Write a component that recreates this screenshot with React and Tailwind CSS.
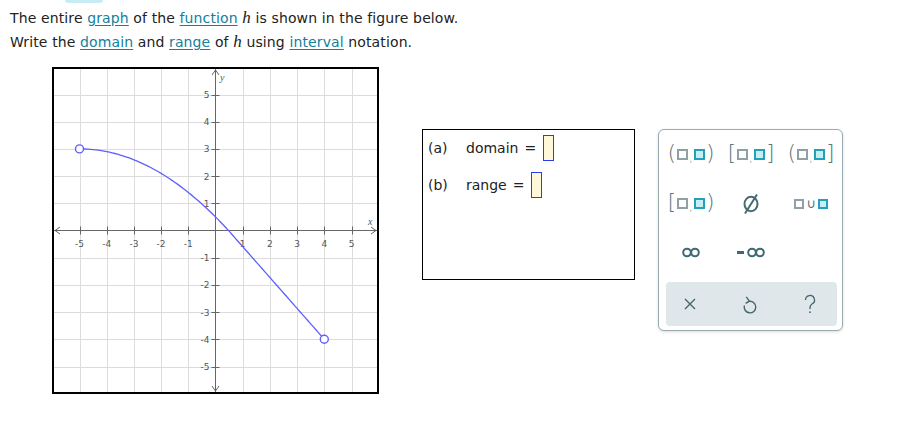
import React from "react";

const U = 27.2;
const O = 161.5;
const px = (x) => O + x * U;
const py = (y) => O - y * U;
const crisp = (v) => Math.round(v) + 0.5;

function curvePoints() {
  const pts = [];
  for (let i = 0; i <= 55; i++) {
    const x = -5 + i * 0.1;
    pts.push([x, 3 - (x + 5) ** 2 / 10]);
  }
  for (let i = 1; i <= 35; i++) {
    const x = 0.5 + i * 0.1;
    const y0 = 3 - 5.5 ** 2 / 10;
    pts.push([x, y0 + ((x - 0.5) / 3.5) * (-4 - y0)]);
  }
  return pts.map(([x, y]) => `${px(x).toFixed(2)},${py(y).toFixed(2)}`).join(" ");
}

function Graph() {
  const ks = [-5, -4, -3, -2, -1, 1, 2, 3, 4, 5];
  const axis = "#666";
  return (
    <svg width="323" height="323" className="block">
      {ks.map((k) => (
        <g key={"g" + k}>
          <line x1={crisp(px(k))} y1={0} x2={crisp(px(k))} y2={323} stroke="#dcdcdc" strokeWidth="1" />
          <line x1={0} y1={crisp(py(k))} x2={323} y2={crisp(py(k))} stroke="#dcdcdc" strokeWidth="1" />
        </g>
      ))}
      <line x1={0} y1={O} x2={323} y2={O} stroke={axis} strokeWidth="1" />
      <line x1={O} y1={0} x2={O} y2={323} stroke={axis} strokeWidth="1" />
      <polyline points={`6,${O - 3.5} 1,${O} 6,${O + 3.5}`} fill="none" stroke={axis} strokeWidth="1" />
      <polyline points={`317,${O - 3.5} 322,${O} 317,${O + 3.5}`} fill="none" stroke={axis} strokeWidth="1" />
      <polyline points={`${O - 3.5},6 ${O},1 ${O + 3.5},6`} fill="none" stroke={axis} strokeWidth="1" />
      <polyline points={`${O - 3.5},317 ${O},322 ${O + 3.5},317`} fill="none" stroke={axis} strokeWidth="1" />
      {ks.map((k) => (
        <g key={"t" + k}>
          <line x1={crisp(px(k))} y1={O - 4} x2={crisp(px(k))} y2={O + 4} stroke={axis} strokeWidth="1" />
          <line x1={O - 4} y1={crisp(py(k))} x2={O + 4} y2={crisp(py(k))} stroke={axis} strokeWidth="1" />
          <text x={px(k)} y={O + 16} textAnchor="middle" fontSize="9" fill="#555" fontFamily="'DejaVu Sans', sans-serif">
            {k}
          </text>
          <text x={O - 6} y={py(k) + 3.5} textAnchor="end" fontSize="9" fill="#555" fontFamily="'DejaVu Sans', sans-serif">
            {k}
          </text>
        </g>
      ))}
      <text x={166} y={12} fontSize="10" fontStyle="italic" fill="#555" fontFamily="'Liberation Serif', serif">y</text>
      <text x={314} y={156} fontSize="10" fontStyle="italic" fill="#555" fontFamily="'Liberation Serif', serif">x</text>
      <polyline points={curvePoints()} fill="none" stroke="#5f5fff" strokeWidth="1.3" />
      <circle cx={px(-5)} cy={py(3)} r="4" fill="white" stroke="#5f5fff" strokeWidth="1.4" />
      <circle cx={px(4)} cy={py(-4)} r="4" fill="white" stroke="#5f5fff" strokeWidth="1.4" />
    </svg>
  );
}

const Link = ({ children }) => (
  <span className="text-[#13809c] underline underline-offset-[2px]">{children}</span>
);
const H = () => (
  <span className="text-[17px] leading-none" style={{ fontFamily: "'Liberation Serif', serif", fontStyle: "italic" }}>h</span>
);

const Gray = ({ s = 11 }) => (
  <span className={`inline-block border-2 border-[#8fa1a6] bg-white ${s === 11 ? "w-[11px] h-[11px]" : "w-[10px] h-[10px]"}`} />
);
const Teal = ({ s = 11 }) => (
  <span className={`inline-block border-2 border-[#22a2b8] bg-[#c8eef5] ${s === 11 ? "w-[11px] h-[11px]" : "w-[10px] h-[10px]"}`} />
);

function Interval({ l, r }) {
  return (
    <span className="flex items-center text-[#5a7880] text-[22px] leading-none" style={{ fontFamily: "'DejaVu Sans', sans-serif", fontWeight: 200 }}>
      <span className="mr-[1px] -mt-[3px]">{l}</span>
      <Gray />
      <span className="text-[12px] ml-[1px] mr-[1px] mt-[6px]">,</span>
      <Teal />
      <span className="ml-[1px] -mt-[3px]">{r}</span>
    </span>
  );
}

const Inf = () => (
  <svg width="18" height="11" viewBox="0 0 18 11">
    <circle cx="5" cy="5.5" r="3.8" fill="none" stroke="#3f6a75" strokeWidth="2" />
    <circle cx="13" cy="5.5" r="3.8" fill="none" stroke="#3f6a75" strokeWidth="2" />
  </svg>
);

function Keypad() {
  const cell = "flex items-center justify-center h-[49px]";
  return (
    <div className="ml-[23px] mt-[62px] w-[185px] h-[202px] border border-[#98acb1] rounded-[6px] bg-white shadow-[0_1px_3px_rgba(0,0,0,0.15)] flex flex-col">
      <div className="grid grid-cols-[60px_60px_60px] pl-[2px]">
        <div className={cell}><Interval l="(" r=")" /></div>
        <div className={cell}><Interval l="[" r="]" /></div>
        <div className={cell}><Interval l="(" r="]" /></div>
        <div className={cell}><Interval l="[" r=")" /></div>
        <div className={cell}>
          <svg width="20" height="22" viewBox="0 0 20 22">
            <ellipse cx="10" cy="11" rx="6.5" ry="7.3" fill="none" stroke="#476b73" strokeWidth="2" />
            <line x1="4" y1="20.5" x2="16" y2="1.5" stroke="#476b73" strokeWidth="2" />
          </svg>
        </div>
        <div className={cell}>
          <span className="flex items-center gap-[2px]">
            <Gray s={10} />
            <span className="text-[13px] text-[#52727b] leading-none" style={{ fontFamily: "'DejaVu Sans', sans-serif" }}>∪</span>
            <Teal s={10} />
          </span>
        </div>
        <div className={cell}><Inf /></div>
        <div className={cell}>
          <span className="flex items-center gap-[3px]">
            <span className="inline-block w-[7px] h-[2.5px] bg-[#3f6a75]" />
            <Inf />
          </span>
        </div>
        <div className={cell} />
      </div>
      <div className="mt-[5px] ml-[7px] w-[171px] h-[44px] bg-[#dfe7ea] rounded-[4px] grid grid-cols-[48px_72px_48px] items-center">
        <div className="flex justify-center">
          <svg width="12" height="12" viewBox="0 0 12 12">
            <path d="M1 1 L11 11 M11 1 L1 11" stroke="#44656e" strokeWidth="1.4" />
          </svg>
        </div>
        <div className="flex justify-center">
          <svg width="16" height="20" viewBox="0 0 16 20">
            <path d="M2.4 11.5 A5.8 5.8 0 1 0 7.2 7.3" fill="none" stroke="#44656e" strokeWidth="1.4" />
            <path d="M4.3 2.8 L7.4 7.2 L3.6 9.4" fill="none" stroke="#44656e" strokeWidth="1.4" />
          </svg>
        </div>
        <div className="flex justify-center">
          <svg width="14" height="20" viewBox="0 0 14 20">
            <path d="M2.5 6 A4.5 4.5 0 1 1 9 10 Q7 11.2 7 13.5 V15" fill="none" stroke="#44656e" strokeWidth="1.3" />
            <circle cx="7" cy="18.2" r="0.9" fill="#44656e" />
          </svg>
        </div>
      </div>
    </div>
  );
}

function InputBox() {
  return <span className="inline-block w-[11px] h-[26px] border border-[#2a3cf0] bg-[#fff8d8]" />;
}

export default function App() {
  return (
    <div className="w-[902px] h-[422px] bg-white overflow-hidden text-[#222]" style={{ fontFamily: "'DejaVu Sans', Verdana, sans-serif" }}>
      <div className="ml-[65px] w-[38px] h-[3px] bg-[#c8ecf6] rounded-b-[8px]" />
      <div className="pl-[10px] mt-[3px] text-[14px] leading-[24px] tracking-[0.12px] h-[48px]">
        <div className="h-[24px]">
          The entire <Link>graph</Link> of the <Link>function</Link> <H /> is shown in the figure below.
        </div>
        <div className="h-[24px]">
          Write the <Link>domain</Link> and <Link>range</Link> of <H /> using <Link>interval</Link> notation.
        </div>
      </div>
      <div className="flex items-start mt-[13px]">
        <div className="ml-[52px] w-[327px] h-[327px] border-2 border-black">
          <Graph />
        </div>
        <div className="ml-[43px] mt-[62px] w-[213px] h-[151px] border border-black pt-[5px] pl-[5px] text-[14px]">
          <div className="flex items-center h-[26px]">
            <span className="w-[38px]">(a)</span>
            <span>domain</span>
            <span className="ml-[6px] mr-[7px]">=</span>
            <InputBox />
          </div>
          <div className="flex items-center h-[26px] mt-[11px]">
            <span className="w-[38px]">(b)</span>
            <span>range</span>
            <span className="ml-[6px] mr-[7px]">=</span>
            <InputBox />
          </div>
        </div>
        <Keypad />
      </div>
    </div>
  );
}
